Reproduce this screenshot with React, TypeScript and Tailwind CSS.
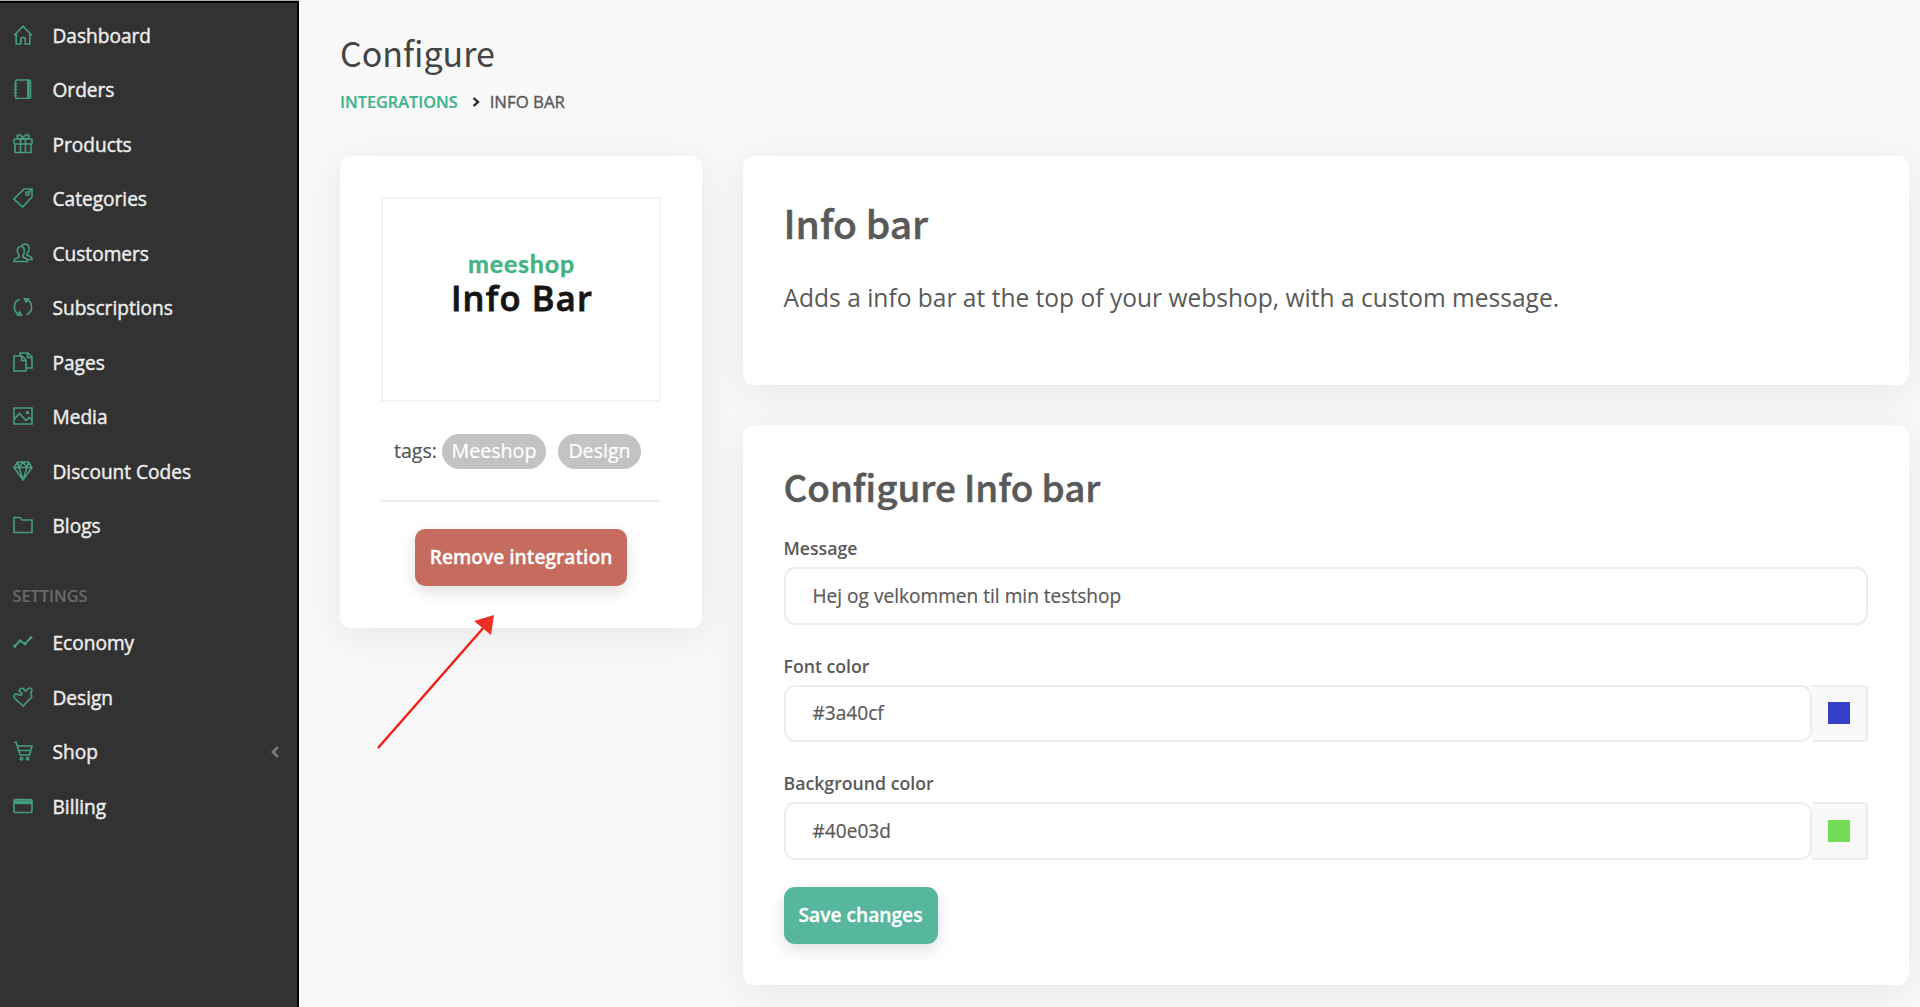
import React from "react";

type MenuItem = {
  label: string;
  icon: React.ReactNode;
  hasChildren?: boolean;
};

const mainMenu: MenuItem[] = [
  { label: "Dashboard", icon: <path d="M1 10.5 10 1.2l9 9.3M3.2 9v10h4.6v-5.5q0-1 1-1h2.4q1 0 1 1V19h4.6V9" /> },
  {
    label: "Orders",
    icon: (
      <>
        <rect x="2.5" y="1" width="15" height="18.5" rx="1.5" />
        <path d="M15.3 1v18.5" strokeWidth="2.6" />
        <path d="M1.2 4.5h3M1.2 7.5h3M1.2 10.5h3M1.2 13.5h3M1.2 16.5h3" strokeWidth="1" />
      </>
    ),
  },
  {
    label: "Products",
    icon: (
      <>
        <rect x="1" y="5" width="18" height="5" rx="1" />
        <path d="M2 10v8.5h16V10M7.5 5v13.5M12.5 5v13.5M10 5Q4 5 4 2.5T7 1q2.5 1 3 4 .5-3 3-4 3-1 3 1.5T10 5" />
      </>
    ),
  },
  {
    label: "Categories",
    icon: (
      <>
        <path d="M11 1h8v8L9.5 19 1 11Z" />
        <circle cx="14.5" cy="5.5" r="1.7" />
        <path d="m15 5 4-4" />
      </>
    ),
  },
  {
    label: "Customers",
    icon: (
      <>
        <path d="M1 18.5c0-3 1.5-3.2 5-4.2v-2C3.5 9 3.5 4 7.5 3.5S12.5 9 10 12.3v2c3.5 1 4.5 1.2 4.5 4.2Z" />
        <path d="M8.5 3C10 .5 14.5.5 15.5 3s.5 5.5-1.5 7.8v1.4c3 1 5 1.5 5 4.3h-4" />
      </>
    ),
  },
  {
    label: "Subscriptions",
    icon: (
      <>
        <path d="M6.5 2.2a8.5 8.5 0 0 0 0 15.6M13.5 17.8a8.5 8.5 0 0 0 0-15.6" />
        <path d="m4.5 18 4 .3-1.5-3.3ZM15.5 2l-4-.3 1.5 3.3Z" />
      </>
    ),
  },
  {
    label: "Pages",
    icon: (
      <>
        <path d="M1 4h8l4 4v11H1ZM8.5 4v4.5H13" />
        <path d="M7 4V1h8l4 4v11h-6M14.5 1v4.5H19" />
      </>
    ),
  },
  {
    label: "Media",
    icon: (
      <>
        <path d="M1 2h18v16H1ZM1.5 13l5-5.5 6.5 7 3-3 3 3" />
        <circle cx="14.5" cy="6.5" r="1" />
      </>
    ),
  },
  { label: "Discount Codes", icon: <path d="M4.5 1h11L19 6.5 10 19 1 6.5ZM1 6.5h18M4.5 1 6 6.5 10 19l4-12.5L15.5 1M6 6.5 10 1l4 5.5" /> },
  { label: "Blogs", icon: <path d="M1 17.5v-15h6l2 2.5h10v12.5Z" /> },
];

const settingsMenu: MenuItem[] = [
  {
    label: "Economy",
    icon: (
      <>
        <path d="m1.5 14.5 5.5-6 5 3.5 6-6.5" strokeWidth="2" />
        <circle cx="1.8" cy="14.2" r=".8" />
        <circle cx="7" cy="8.8" r=".8" />
        <circle cx="12" cy="11.8" r=".8" />
        <circle cx="18" cy="5.5" r=".8" />
      </>
    ),
  },
  { label: "Design", icon: <path d="M10 19 2 11.5C0 9 1.5 6.5 4 7c1.5 1 3 2 4.5.8S8 5.5 6.5 4.5 8 .5 10 1.5s1 2.5 2.5 2.5S14 1 16.5 1 19.5 4 18 5.5s1.5 2.5.5 4.8Z" /> },
  {
    label: "Shop",
    icon: (
      <>
        <path d="M.8 1.2h2.4L7 14h9.5L19 5H4.5M5.8 9.5h11.5" />
        <circle cx="8.5" cy="17.8" r="1.2" />
        <circle cx="14.5" cy="17.8" r="1.2" />
      </>
    ),
  },
  {
    label: "Billing",
    icon: (
      <>
        <rect x="1" y="3.5" width="18" height="13" rx="1" />
        <path d="M1 6.2h18" strokeWidth="4" />
      </>
    ),
  },
];

const SidebarItem = ({ label, icon, hasChildren }: MenuItem) => {
  return (
    <li className="flex h-[54.5px] items-center pl-[12.5px]">
      <svg viewBox="0 0 20 20" className="mb-px h-5 w-5 fill-none stroke-[#459c83]" strokeWidth="1.6">
        {icon}
      </svg>
      <span className="mt-[2px] ml-5 text-[19.1px] leading-none text-[#ececec] [-webkit-text-stroke:0.45px]">{label}</span>
      {hasChildren && (
        <svg viewBox="0 0 8 12" className="mr-[18px] ml-auto h-3 w-2 fill-none stroke-[#777]" strokeWidth="2.8">
          <path d="M7 1 2 6l5 5" />
        </svg>
      )}
    </li>
  );
};

const Sidebar = () => {
  return (
    <div className="h-full w-[299px] shrink-0 border-t border-[#adb2ae]">
      <aside className="h-full border-t-2 border-r-2 border-black bg-[#323232] pt-[5px]">
        <ul>
          {mainMenu.map((item) => (
            <SidebarItem key={item.label} {...item} />
          ))}
        </ul>
        <p className="mt-[35.5px] mb-[12px] pl-[12.5px] text-[16.3px] leading-[15px] font-semibold text-[#686868] [-webkit-text-stroke:0.2px]">
          SETTINGS
        </p>
        <ul>
          {settingsMenu.map((item) => (
            <SidebarItem key={item.label} {...item} hasChildren={item.label === "Shop"} />
          ))}
        </ul>
      </aside>
    </div>
  );
};

const IntegrationCard = () => {
  return (
    <section className="relative h-[472px] w-[362px] shrink-0 rounded-[11px] bg-white px-[41px] pt-[41px] shadow-[0_8px_40px_rgba(0,0,0,0.07)]">
      <div className="flex h-[205px] flex-col items-center border-2 border-[#f3f3f3] pt-[50px]">
        <p className="pl-px font-[Lato] text-[25px] leading-[28px] font-bold tracking-[0.8px] text-[#43b384] [-webkit-text-stroke:0.4px]">
          meeshop
        </p>
        <p className="mt-[2px] pl-[2px] text-[34.5px] leading-[38px] font-semibold tracking-[1.2px] text-[#151515] [-webkit-text-stroke:0.8px]">
          Info Bar
        </p>
      </div>
      <div className="mt-[32px] flex h-[35px] items-center pl-[13px] text-[19.6px] leading-none text-[#555] [-webkit-text-stroke:0.2px]">
        tags:
        <span className="ml-[5px] flex h-[35px] w-[104px] items-center justify-center rounded-full bg-[#c3c3c3] text-white">Meeshop</span>
        <span className="ml-3 flex h-[35px] w-[83px] items-center justify-center rounded-full bg-[#c3c3c3] text-white">Design</span>
      </div>
      <hr className="mt-[31px] border-t-2 border-[#f0f0f0]" />
      <button className="mx-auto mt-[27.5px] block h-[57px] w-[212px] rounded-[10px] bg-[#c56c5e] text-[19.2px] font-semibold text-white shadow-[0_6px_16px_rgba(0,0,0,0.12)] [-webkit-text-stroke:0.3px]">
        Remove integration
      </button>
      {/* arrow pointing at the remove button */}
      <svg viewBox="0 0 120 136" className="absolute top-[458px] left-[36px] h-[136px] w-[120px]">
        <path d="M2 134 109 12" className="stroke-[#f21b12]" strokeWidth="2.4" />
        <path d="M118 1 98 7l17 14Z" className="fill-[#ee3124]" />
      </svg>
    </section>
  );
};

const Field = ({ label, value, swatch }: { label: string; value: string; swatch?: string }) => {
  return (
    <div className="h-[117.5px]">
      <label className="block h-[28px] text-[17.7px] leading-[19px] font-semibold text-[#595959]">{label}</label>
      <div className="flex h-[57.5px]">
        <div className="flex flex-1 items-center rounded-[11px] border-2 border-[#ededed] pt-px pl-[27px] text-[19.1px] leading-none text-[#595959] [-webkit-text-stroke:0.2px]">
          {value}
        </div>
        {swatch && (
          <div className="flex w-[56px] items-center justify-center rounded-r-[3px] border-2 border-l-0 border-[#ededed] bg-[#f8f8f8]">
            <span className={`h-[22px] w-[22px] ${swatch}`} />
          </div>
        )}
      </div>
    </div>
  );
};

const App = () => {
  return (
    <div className="flex h-[1007px] w-[1920px] overflow-hidden bg-[#f8f8f8] font-['Open_Sans',sans-serif]">
      <Sidebar />
      <main className="flex-1 pt-[30px] pl-[41px]">
        <h1 className="font-['Noto_Sans_CJK_JP',sans-serif] text-[34px] leading-[46px] text-[#444]">Configure</h1>
        <nav className="mt-[16px] flex h-5 items-center text-[16.3px] leading-none">
          <span className="font-semibold text-[#3fb38d] [-webkit-text-stroke:0.2px]">INTEGRATIONS</span>
          <svg viewBox="0 0 8 10" className="mr-[10px] ml-[14px] h-[10px] w-2 fill-none stroke-[#222]" strokeWidth="2.3">
            <path d="m1.5 1 4.5 4-4.5 4" />
          </svg>
          <span className="text-[16.8px] text-[#595959] [-webkit-text-stroke:0.4px]">INFO BAR</span>
        </nav>
        <div className="mt-[43.5px] flex items-start gap-[40.5px]">
          <IntegrationCard />
          <div className="w-[1166px]">
            <section className="h-[229.5px] rounded-[11px] bg-white px-[41px] pt-[40px] shadow-[0_8px_40px_rgba(0,0,0,0.07)]">
              <h2 className="font-['Noto_Sans_CJK_JP',sans-serif] text-[39px] leading-[52px] font-medium text-[#595959] [-webkit-text-stroke:0.5px]">
                Info bar
              </h2>
              <p className="mt-[34px] text-[24.55px] leading-8 text-[#595959]">
                Adds a info bar at the top of your webshop, with a custom message.
              </p>
            </section>
            <section className="mt-10 h-[559.5px] rounded-[11px] bg-white px-[41px] pt-[35px] shadow-[0_8px_40px_rgba(0,0,0,0.07)]">
              <h2 className="mb-[27px] font-['Noto_Sans_CJK_JP',sans-serif] text-[36.8px] leading-[52px] font-medium text-[#595959] [-webkit-text-stroke:0.5px]">
                Configure Info bar
              </h2>
              <Field label="Message" value="Hej og velkommen til min testshop" />
              <Field label="Font color" value="#3a40cf" swatch="bg-[#3540c8]" />
              <Field label="Background color" value="#40e03d" swatch="bg-[#74dc57]" />
              <button className="-mt-[5px] block h-[57.5px] w-[154px] rounded-[11px] bg-[#56b79c] text-[19.2px] font-semibold text-white shadow-[0_6px_16px_rgba(0,0,0,0.12)] [-webkit-text-stroke:0.3px]">
                Save changes
              </button>
            </section>
          </div>
        </div>
      </main>
    </div>
  );
};

export default App;
